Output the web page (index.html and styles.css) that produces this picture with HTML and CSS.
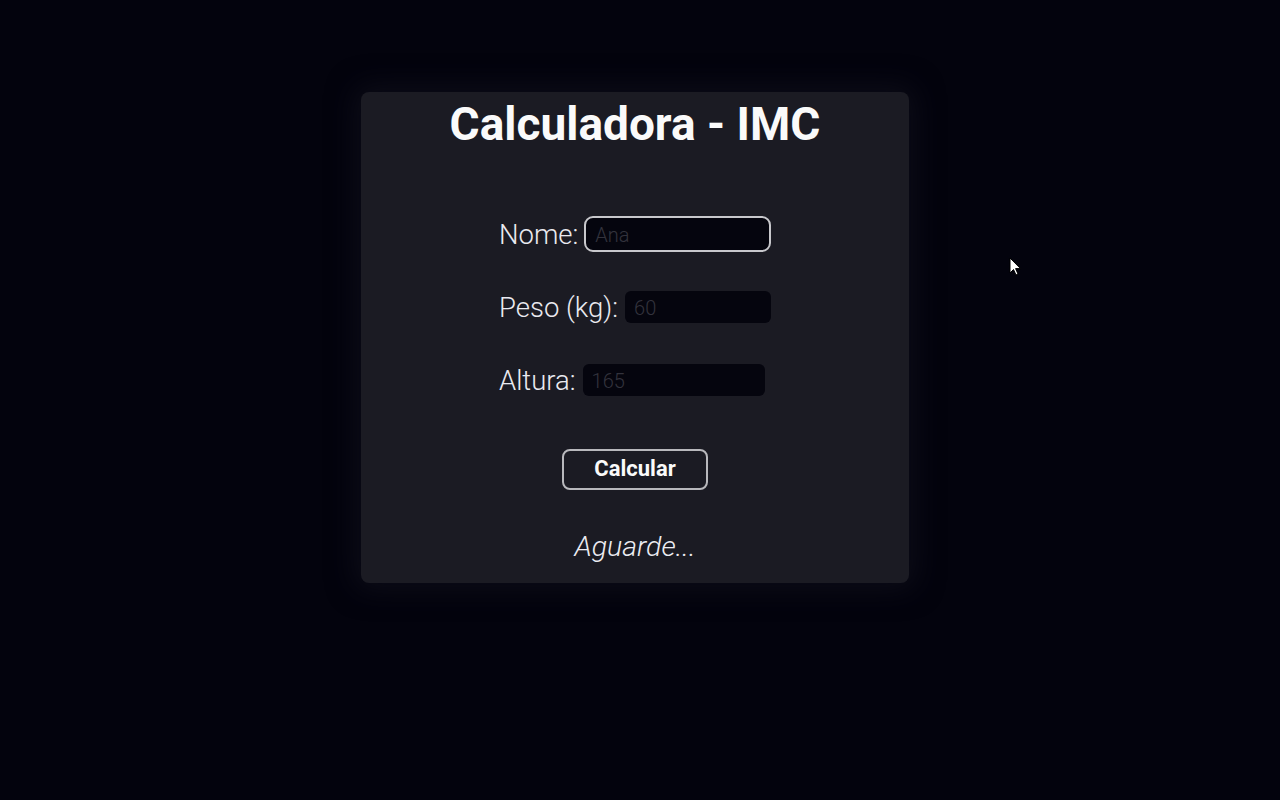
FILE: index.html
```html
<!DOCTYPE html>
<html lang="pt-BR">
<head>
<meta charset="utf-8">
<title>Calculadora - IMC</title>
<link rel="stylesheet" href="styles.css">
</head>
<body>
<main class="stage">
  <section class="card">
    <h1 class="title">Calculadora - IMC</h1>
    <form class="form">
      <div class="row">
        <label class="label" for="nome">Nome:</label>
        <input class="field field-nome focused" id="nome" type="text" placeholder="Ana">
      </div>
      <div class="row">
        <label class="label" for="peso">Peso (kg):</label>
        <input class="field field-peso" id="peso" type="text" placeholder="60">
      </div>
      <div class="row">
        <label class="label" for="altura">Altura:</label>
        <input class="field field-altura" id="altura" type="text" placeholder="165">
      </div>
    </form>
    <button class="btn" type="button">Calcular</button>
    <p class="result">Aguarde...</p>
  </section>
</main>
<svg class="cursor" width="14" height="20" viewBox="0 0 14 20" aria-hidden="true">
  <path d="M1 1 L1 16 L4.5 12.5 L7 18 L9 17 L6.6 11.6 L11.5 11.6 Z" fill="#fff" stroke="#000" stroke-width="1"/>
</svg>
</body>
</html>
```
FILE: styles.css
```css
html, body {
  margin: 0;
  padding: 0;
  background: #03030d;
  height: 100%;
}
body {
  font-family: Roboto, "Liberation Sans", sans-serif;
  color: #f2f2f2;
}
.stage {
  display: flex;
  justify-content: center;
  padding: 92px 10px 0 0;
}
.card {
  width: 548px;
  height: 491px;
  box-sizing: border-box;
  background: #1b1b23;
  border-radius: 8px;
  box-shadow: 0 0 28px 6px rgba(20, 20, 32, 0.55);
  display: flex;
  flex-direction: column;
  align-items: center;
  padding-top: 4px;
}
.title {
  margin: 0;
  font-size: 46px;
  font-weight: 700;
  line-height: 56px;
  color: #fafafa;
}
.form {
  margin-top: 64px;
  width: 272px;
  display: flex;
  flex-direction: column;
  gap: 37px;
}
.row {
  display: flex;
  align-items: center;
  gap: 6px;
  height: 36px;
  white-space: nowrap;
}
.label {
  flex-shrink: 0;
  font-size: 27.5px;
  font-weight: 300;
  color: #eaeaf0;
}
.field {
  flex-shrink: 0;
  height: 32px;
  box-sizing: border-box;
  border: none;
  border-radius: 6px;
  background: #05050e;
  color: #e0e0e0;
  font-family: Roboto, "Liberation Sans", sans-serif;
  font-size: 20px;
  font-weight: 300;
  padding: 2px 9px 0;
  outline: none;
}
.field::placeholder {
  color: #33333d;
}
.field.focused {
  height: 36px;
  border: 2px solid #c8c8cc;
  border-radius: 9px;
  padding-left: 9px;
}
.field-nome { width: 187px; }
.field-peso { width: 146px; margin-left: 1px; }
.field-altura { width: 182px; margin-left: 1px; }
.btn {
  margin-top: 51px;
  width: 146px;
  height: 41px;
  background: #1b1b23;
  border: 2px solid #b8b8bc;
  border-radius: 8px;
  color: #fafafa;
  font-family: Roboto, "Liberation Sans", sans-serif;
  font-size: 22px;
  font-weight: 700;
  padding: 0 0 3px;
}
.result {
  margin: 40px 0 0;
  font-size: 28.5px;
  font-weight: 300;
  font-style: italic;
  color: #ececf2;
}
.cursor {
  position: absolute;
  left: 1009px;
  top: 257px;
}
```
